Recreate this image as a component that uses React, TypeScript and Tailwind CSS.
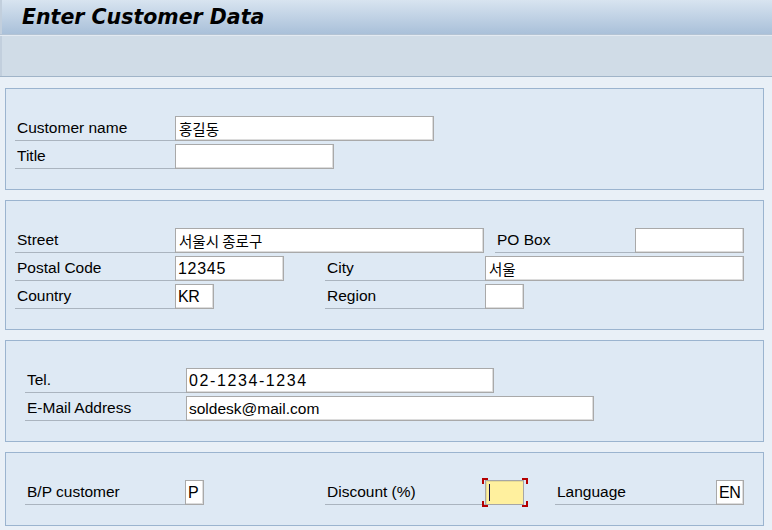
import React from "react";

const labelFont = "font-['Liberation_Sans','Noto_Sans_CJK_KR',sans-serif]";

function Label({ text, w }: { text: string; w: number }) {
  return (
    <div
      className={`h-[25px] border-b border-[#aab4bf] flex items-center pl-[2px] text-[15.5px] text-black ${labelFont} shrink-0`}
      style={{ width: w }}
    >
      {text}
    </div>
  );
}

type Kind = "kr" | "num" | "sans";

function Input({
  w,
  value = "",
  kind = "sans",
  active = false,
  track = 0,
}: {
  w: number;
  value?: string;
  kind?: Kind;
  active?: boolean;
  track?: number;
}) {
  const font =
    kind === "kr"
      ? "font-['Noto_Sans_CJK_KR','Liberation_Sans',sans-serif] text-[14.5px] pl-[3px]"
      : kind === "num"
      ? "font-['Liberation_Sans',sans-serif] text-[16px] pl-[2px]"
      : "font-['Liberation_Sans',sans-serif] text-[15.5px] pl-[2px]";
  if (active) {
    return (
      <div className="relative shrink-0" style={{ width: w }}>
        <div className="h-[25px] border border-[#a6a6a6] bg-[#fff09e] shadow-[inset_1px_1px_0_#e8dc94] flex items-center pl-[3px]">
          <div className="w-px h-[17px] bg-[#10104a]" />
        </div>
        <span className="absolute -left-[3px] -top-[2px] w-[6px] h-[6px] border-l-2 border-t-2 border-[#b40000]" />
        <span className="absolute -right-[4px] -top-[2px] w-[6px] h-[6px] border-r-2 border-t-2 border-[#b40000]" />
        <span className="absolute -left-[3px] -bottom-[2px] w-[6px] h-[6px] border-l-2 border-b-2 border-[#b40000]" />
        <span className="absolute -right-[4px] -bottom-[2px] w-[6px] h-[6px] border-r-2 border-b-2 border-[#b40000]" />
      </div>
    );
  }
  return (
    <div
      className={`h-[25px] border border-[#a9a9a9] bg-white shadow-[inset_-1px_-1px_0_#dcdcdc] flex items-center text-black whitespace-nowrap overflow-hidden shrink-0 ${font}`}
      style={{ width: w, letterSpacing: track ? `${track}px` : undefined }}
    >
      {value}
    </div>
  );
}

function Box({ children, pl }: { children: React.ReactNode; pl: number }) {
  return (
    <div
      className="border border-[#9bb4cf] bg-[#dee9f4] pt-[27px] pb-[20px] flex flex-col gap-[3px]"
      style={{ paddingLeft: pl }}
    >
      {children}
    </div>
  );
}

function Row({ children }: { children: React.ReactNode }) {
  return <div className="flex items-end h-[25px]">{children}</div>;
}

export default function App() {
  return (
    <div className="w-[772px] h-[530px] bg-[#e9f0f7] overflow-hidden">
      <div className="h-[34px] bg-gradient-to-b from-[#d8e4f0] to-[#a9c0d9] border-l-2 border-[#c2cfdd] flex items-center pl-[20px]">
        <span className="font-['DejaVu_Sans',sans-serif] font-bold italic text-[20.5px] text-black leading-none">
          Enter Customer Data
        </span>
      </div>
      <div className="h-px bg-[#b3c3d4]" />
      <div className="h-px bg-[#e3eaf2]" />
      <div className="h-[40px] bg-[#d0dce7] border-l-2 border-[#c2cfdd]" />
      <div className="h-px bg-[#a0b4c8]" />
      <div className="pl-[5px] pt-[11px] w-[764px] flex flex-col gap-[10px]">
        <Box pl={9}>
          <Row>
            <Label text="Customer name" w={160} />
            <Input w={259} value="홍길동" kind="kr" />
          </Row>
          <Row>
            <Label text="Title" w={160} />
            <Input w={159} />
          </Row>
        </Box>
        <Box pl={9}>
          <Row>
            <Label text="Street" w={160} />
            <Input w={309} value="서울시 종로구" kind="kr" />
            <div className="w-[11px] shrink-0" />
            <Label text="PO Box" w={140} />
            <Input w={109} />
          </Row>
          <Row>
            <Label text="Postal Code" w={160} />
            <Input w={109} value="12345" kind="num" track={0.7} />
            <div className="w-[41px] shrink-0" />
            <Label text="City" w={160} />
            <Input w={259} value="서울" kind="kr" />
          </Row>
          <Row>
            <Label text="Country" w={160} />
            <Input w={39} value="KR" kind="num" track={-0.5} />
            <div className="w-[111px] shrink-0" />
            <Label text="Region" w={160} />
            <Input w={39} />
          </Row>
        </Box>
        <Box pl={19}>
          <Row>
            <Label text="Tel." w={161} />
            <Input w={308} value="02-1234-1234" kind="num" track={1.6} />
          </Row>
          <Row>
            <Label text="E-Mail Address" w={161} />
            <Input w={408} value="soldesk@mail.com" kind="sans" />
          </Row>
        </Box>
        <Box pl={19}>
          <Row>
            <Label text="B/P customer" w={160} />
            <Input w={19} value="P" kind="num" />
            <div className="w-[121px] shrink-0" />
            <Label text="Discount (%)" w={160} />
            <Input w={39} active />
            <div className="w-[31px] shrink-0" />
            <Label text="Language" w={161} />
            <Input w={28} value="EN" kind="num" track={-0.5} />
          </Row>
        </Box>
      </div>
    </div>
  );
}
